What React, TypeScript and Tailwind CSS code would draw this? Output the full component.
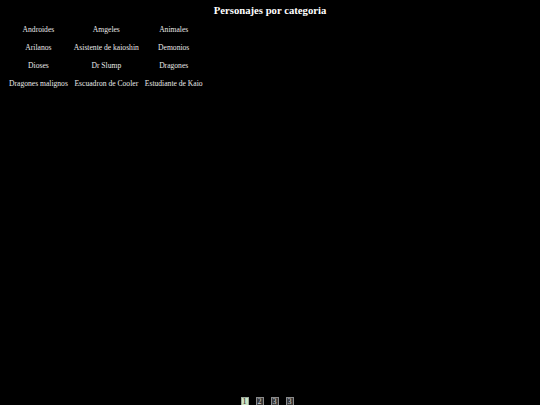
const categorias = [
  'Androides',
  'Amgeles',
  'Animales',
  'Arilanos',
  'Asistente de kaioshin',
  'Demonios',
  'Dioses',
  'Dr Slump',
  'Dragones',
  'Dragones malignos',
  'Escuadron de Cooler',
  'Estudiante de Kaio',
]

const paginas = ['1', '2', '3', '3']

export default function App() {
  return (
    <div className="flex h-[405px] flex-col overflow-hidden bg-black font-['Liberation_Serif',serif] text-white">
      <h1 className="pt-[3px] text-center text-[10.7px] leading-[14px] font-bold">
        Personajes por categoria
      </h1>

      {/* tabla de categorias */}
      <div className="mt-[4px] ml-[6px] grid w-max grid-cols-[auto_auto_auto] text-[7.6px] leading-[18px] text-[#e8e8e8]">
        {categorias.map((c) => (
          <div key={c} className="px-[3px] text-center whitespace-nowrap">
            {c}
          </div>
        ))}
      </div>

      {/* paginacion */}
      <div className="mt-auto flex justify-center gap-[7px] pr-[6px]">
        {paginas.map((p, i) => (
          <span
            key={i}
            className={
              i === 0
                ? 'h-[10px] w-[8px] translate-y-[2px] border border-[#9aa89a] bg-[#cfe6c4] text-center text-[8px] leading-[8px] text-[#222]'
                : 'h-[10px] w-[8px] translate-y-[2px] border border-[#8a8a8a] bg-[#3a3a3a] text-center text-[8px] leading-[8px] text-[#ccc]'
            }
          >
            {p}
          </span>
        ))}
      </div>
    </div>
  )
}
